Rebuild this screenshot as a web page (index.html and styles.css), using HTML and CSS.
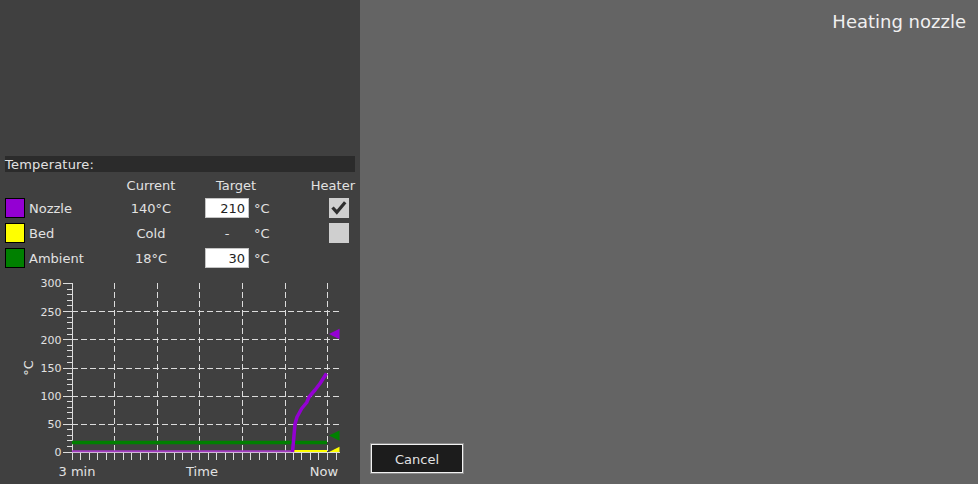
FILE: index.html
```html
<!DOCTYPE html>
<html>
<head>
<meta charset="utf-8">
<link rel="stylesheet" href="styles.css">
</head>
<body>
<div class="app">
  <aside class="side">
    <div class="section-title">Temperature:</div>
    <div class="temps">
      <div></div><div></div>
      <div class="hd">Current</div>
      <div class="hd">Target</div>
      <div class="hd heater-hd">Heater</div>

      <span class="swatch nozzle"></span>
      <span class="name">Nozzle</span>
      <span class="cur">140°C</span>
      <span class="target"><input class="field" type="text" value="210"><span class="unit">°C</span></span>
      <span class="heat"><span class="check"><svg width="20" height="20" viewBox="0 0 20 20"><path d="M3.5 9.5 L7.8 14.2 L16.2 4.2" fill="none" stroke="#2e2e2e" stroke-width="3.2" stroke-linejoin="miter"/></svg></span></span>

      <span class="swatch bed"></span>
      <span class="name">Bed</span>
      <span class="cur">Cold</span>
      <span class="target"><span class="dash">-</span><span class="unit">°C</span></span>
      <span class="heat"><span class="check"></span></span>

      <span class="swatch ambient"></span>
      <span class="name">Ambient</span>
      <span class="cur">18°C</span>
      <span class="target"><input class="field" type="text" value="30"><span class="unit">°C</span></span>
      <span class="heat"></span>
    </div>

    <svg class="chart" width="350" height="216" viewBox="5 268 350 216">
      <g class="grid">
        <path d="M72 311.5 H340 M72 339.5 H340 M72 368.5 H340 M72 396.5 H340 M72 424.5 H340"/>
        <path d="M114.5 283 V452 M157.5 283 V452 M199.5 283 V452 M242.5 283 V452 M285.5 283 V452 M327.5 283 V452"/>
      </g>
      <g class="axis">
        <path d="M72.5 283 V452.5 M72 452.5 H340"/>
        <path d="M63 283.5 H72 M63 311.5 H72 M63 339.5 H72 M63 368.5 H72 M63 396.5 H72 M63 424.5 H72 M63 452.5 H72"/>
        <path d="M67 289.5 H72 M67 294.5 H72 M67 300.5 H72 M67 305.5 H72
                 M67 317.5 H72 M67 322.5 H72 M67 328.5 H72 M67 334.5 H72
                 M67 345.5 H72 M67 350.5 H72 M67 356.5 H72 M67 362.5 H72
                 M67 373.5 H72 M67 379.5 H72 M67 384.5 H72 M67 390.5 H72
                 M67 401.5 H72 M67 407.5 H72 M67 412.5 H72 M67 418.5 H72
                 M67 429.5 H72 M67 435.5 H72 M67 440.5 H72 M67 446.5 H72"/>
        <path d="M72.5 452 V460 M80.5 452 V460 M89.5 452 V460 M97.5 452 V460 M106.5 452 V460 M114.5 452 V460
                 M123.5 452 V460 M131.5 452 V460 M140.5 452 V460 M148.5 452 V460 M157.5 452 V460
                 M165.5 452 V460 M174.5 452 V460 M182.5 452 V460 M191.5 452 V460 M199.5 452 V460
                 M208.5 452 V460 M216.5 452 V460 M225.5 452 V460 M233.5 452 V460 M242.5 452 V460
                 M250.5 452 V460 M259.5 452 V460 M267.5 452 V460 M276.5 452 V460 M285.5 452 V460
                 M293.5 452 V460 M301.5 452 V460 M310.5 452 V460 M318.5 452 V460 M327.5 452 V460 M336.5 452 V460"/>
      </g>
      <g class="ylab">
        <text x="61.5" y="287">300</text>
        <text x="61.5" y="315.5">250</text>
        <text x="61.5" y="343.5">200</text>
        <text x="61.5" y="372">150</text>
        <text x="61.5" y="400">100</text>
        <text x="61.5" y="428">50</text>
        <text x="61.5" y="456">0</text>
      </g>
      <text class="unitlab" transform="translate(33 368) rotate(-90)">°C</text>
      <g class="xlab">
        <text x="77" y="476">3 min</text>
        <text x="202" y="476">Time</text>
        <text x="324" y="476">Now</text>
      </g>
      <path d="M72 442.5 H327" stroke="#008000" stroke-width="3.5" fill="none"/>
      <path d="M72 451.3 H293" stroke="#a23cc0" stroke-width="2" fill="none"/>
      <path d="M293 451 H327" stroke="#ffff00" stroke-width="2.2" fill="none"/>
      <path d="M292.5 452 L293.5 441 L295 424 L297 417 L301.7 408.5 L306.7 402.5 L309 397 L315 390 L320 383.5 L326.5 373.5" stroke="#9400d3" stroke-width="3.5" fill="none" stroke-linejoin="round"/>
      <polygon points="329,334 339.5,328.8 339.5,339.2" fill="#9400d3"/>
      <polygon points="329,435.5 339.5,430.5 339.5,440.8" fill="#008000"/>
      <polygon points="329,452 339.5,446.8 339.5,452" fill="#ffff00"/>
    </svg>
  </aside>
  <main class="main">
    <div class="status">Heating nozzle</div>
    <button class="cancel" type="button">Cancel</button>
  </main>
</div>
</body>
</html>
```

FILE: styles.css
```css
html, body {
  margin: 0;
  padding: 0;
  height: 100%;
}

body {
  font-family: "DejaVu Sans", "Liberation Sans", sans-serif;
  font-size: 13px;
  color: #e2e2e2;
  background: #646464;
}

.app {
  display: flex;
  width: 978px;
  height: 484px;
  overflow: hidden;
}

.side {
  width: 360px;
  flex: none;
  box-sizing: border-box;
  background: #404040;
  padding: 156px 5px 0 5px;
  display: flex;
  flex-direction: column;
}

.section-title {
  height: 16px;
  line-height: 17px;
  background: #2b2b2b;
  letter-spacing: 0.2px;
}

.temps {
  display: grid;
  grid-template-columns: 20px 76px 100px 70px 84px;
  grid-template-rows: 16px 20px 20px 20px;
  row-gap: 5px;
  padding-top: 5px;
  line-height: 20px;
}

.hd {
  line-height: 16px;
  padding-top: 1px;
  text-align: center;
}

.heater-hd {
  text-align: right;
}

.swatch {
  box-sizing: border-box;
  width: 20px;
  height: 20px;
  border: 1px solid #000;
}

.swatch.nozzle { background: #9400d3; }
.swatch.bed { background: #ffff00; }
.swatch.ambient { background: #008000; }

.name {
  padding-left: 4px;
  padding-top: 1px;
}

.cur {
  text-align: center;
  padding-top: 1px;
}

.target {
  display: flex;
  align-items: center;
  padding-left: 4px;
}

.field {
  box-sizing: border-box;
  width: 44px;
  height: 20px;
  margin: 0;
  border: 1px solid #c4c4c4;
  background: #ffffff;
  color: #222222;
  font-family: "DejaVu Sans", "Liberation Sans", sans-serif;
  font-size: 13px;
  text-align: right;
  padding: 1px 3px 0 0;
  outline: none;
}

.dash {
  width: 44px;
  text-align: center;
  padding-top: 1px;
}

.unit {
  margin-left: 5px;
  padding-top: 1px;
}

.heat {
  display: flex;
  justify-content: flex-end;
  padding-right: 6px;
}

.check {
  display: block;
  width: 20px;
  height: 20px;
  background: #cfcfcf;
}

.check svg {
  display: block;
}

.chart {
  display: block;
  flex: none;
}

.grid path {
  stroke: #dcdcdc;
  stroke-width: 1;
  stroke-dasharray: 6 3;
  fill: none;
}

.axis path {
  stroke: #dcdcdc;
  stroke-width: 1;
  fill: none;
}

.ylab text {
  font-family: "DejaVu Sans", sans-serif;
  font-size: 11px;
  fill: #e2e2e2;
  text-anchor: end;
}

.xlab text {
  font-family: "DejaVu Sans", sans-serif;
  font-size: 13px;
  fill: #e2e2e2;
  text-anchor: middle;
}

.unitlab {
  font-family: "DejaVu Sans", sans-serif;
  font-size: 13px;
  fill: #e2e2e2;
  text-anchor: middle;
}

.main {
  flex: 1;
  display: flex;
  flex-direction: column;
  justify-content: space-between;
  align-items: flex-start;
  padding: 11px 12px 11px 11px;
}

.status {
  align-self: flex-end;
  font-size: 18px;
  color: #f0f0f0;
}

.cancel {
  width: 92px;
  height: 29px;
  box-sizing: border-box;
  background: #1c1c1c;
  border: 1px solid #f2f2f2;
  box-shadow: 0 0 0 1px #8c8c8c;
  color: #e2e2e2;
  font-family: "DejaVu Sans", "Liberation Sans", sans-serif;
  font-size: 13px;
  padding: 1px 0 0 0;
}
```
